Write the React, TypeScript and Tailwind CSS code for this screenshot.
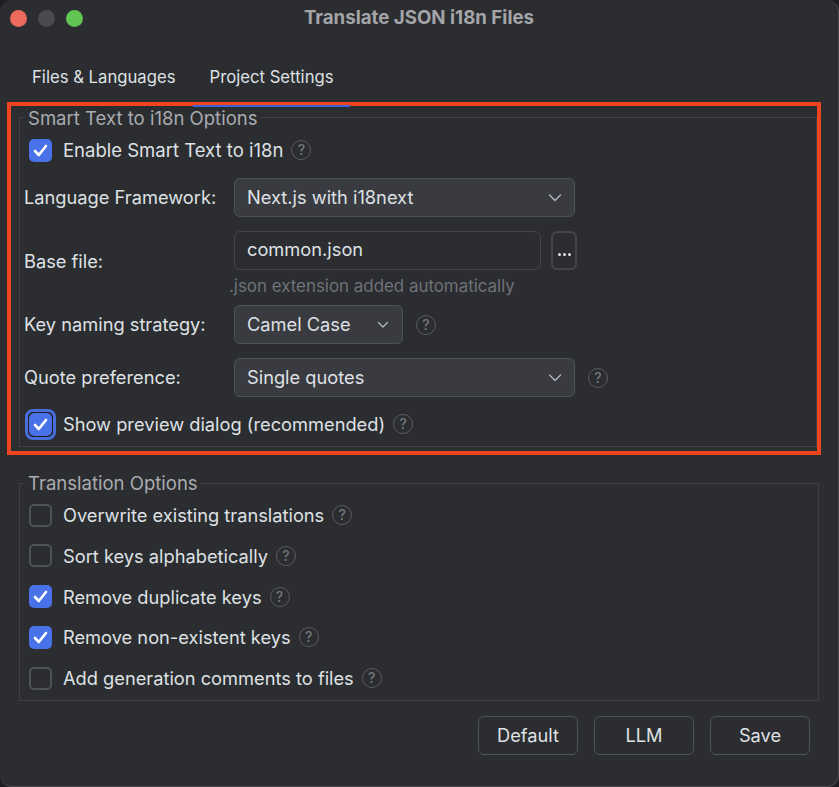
import React from "react";

const Help = () => (
  <span className="flex h-[20px] w-[20px] shrink-0 items-center justify-center rounded-full border-[1.5px] border-[#5a5c61] text-[14px] font-medium leading-none text-[#74777c]">?</span>
);

const Check = ({ on, focus }: { on?: boolean; focus?: boolean }) => (
  <span className={"relative flex h-[23px] w-[23px] shrink-0 items-center justify-center rounded-[5px] " + (on ? "bg-[#4a72e8]" : "border-2 border-[#4e5157]")}>
    {focus && <span className="absolute -inset-[4px] rounded-[8px] border-[3px] border-[#466fdc]" />}
    {focus && <span className="absolute -inset-[1px] rounded-[6px] border border-[#1e2023]" />}
    {on && (
      <svg width="17" height="17" viewBox="0 0 17 17" fill="none">
        <path d="M3 9 L6.8 13 L14 4" stroke="#ffffff" strokeWidth="2.6" strokeLinecap="round" strokeLinejoin="round" />
      </svg>
    )}
  </span>
);

const CheckRow = ({ label, on, focus, wide }: { label: string; on?: boolean; focus?: boolean; wide?: boolean }) => (
  <div className="flex items-center">
    <Check on={on} focus={focus} />
    <span className={"ml-[11px] text-[#dfe1e5] " + (wide ? "text-[18.5px]" : "")}>{label}</span>
    <span className="ml-[8px]"><Help /></span>
  </div>
);

const Select = ({ value, width, small }: { value: string; width: string; small?: boolean }) => (
  <div className={"flex h-[39px] items-center justify-between rounded-[6px] border border-[#4e5157] bg-[#393b40] pl-[12px] pb-[2px] text-[#dfe1e5] " + (small ? "pr-[13px] " : "pr-[12px] ") + width}>
    <span>{value}</span>
    <svg className="mt-[2px]" width={small ? 12 : 14} height="9" viewBox={small ? "0 0 12 9" : "0 0 14 9"} fill="none">
      {small ? (
        <path d="M1.5 2.5 L6 7 L10.5 2.5" stroke="#b9bcc2" strokeWidth="1.2" strokeLinecap="round" strokeLinejoin="round" />
      ) : (
        <path d="M1.5 2 L7 7.5 L12.5 2" stroke="#b9bcc2" strokeWidth="1.2" strokeLinecap="round" strokeLinejoin="round" />
      )}
    </svg>
  </div>
);

const Btn = ({ label }: { label: string }) => (
  <div className="flex h-[39px] w-[100px] items-center justify-center rounded-[6px] border border-[#4e5157] pb-[2px] text-[#dfe1e5]">{label}</div>
);

export default function App() {
  return (
    <div className="h-[787px] w-[839px] bg-[#1e1f22] font-['Inter',sans-serif] text-[18.25px] leading-[24px]">
      <div className="relative flex h-full w-full flex-col rounded-[12px] border-r border-b border-[#4a4c50] bg-[#2b2d30]">
        <div className="flex h-[36px] shrink-0 items-center pl-[10px]">
          <div className="flex gap-[11px]">
            <span className="h-[17px] w-[17px] rounded-full bg-[#ed6a5e]" />
            <span className="h-[17px] w-[17px] rounded-full bg-[#4a4b4f]" />
            <span className="h-[17px] w-[17px] rounded-full bg-[#61c554]" />
          </div>
          <div className="ml-[208px] w-[256px] text-center text-[18.7px] font-bold text-[#a3a5a9]">Translate JSON i18n Files</div>
        </div>
        <div className="flex h-[66px] shrink-0 items-start gap-[34px] pl-[32px] pt-[29px] text-[16.7px] text-[#dfe1e5]">
          <span>Files &amp; Languages</span>
          <span>Project Settings</span>
        </div>
        <div className="relative ml-[7px] h-[353px] w-[814px] shrink-0 border-4 border-[#ee4420]">
          <div className="absolute -top-[1px] left-[182px] h-[2px] w-[157px] bg-[#3a64d8]" />
          <fieldset className="ml-[8px] mt-[1px] h-[340px] w-[798px] border border-[#3e4044]">
            <legend className="relative top-[1px] ml-[5px] px-[3px] text-[18.55px] leading-[20px] text-[#a9abaf]">Smart Text to i18n Options</legend>
            <div className="pl-[4px]">
              <div className="ml-[5px] mt-[11px]"><CheckRow label="Enable Smart Text to i18n" on wide /></div>
              <div className="mt-[16px] flex items-center">
                <span className="w-[210px] pb-[2px] text-[#dfe1e5]">Language Framework:</span>
                <Select value="Next.js with i18next" width="w-[341px]" />
              </div>
              <div className="mt-[14px] flex items-start">
                <span className="mt-[18px] w-[210px] text-[#dfe1e5]">Base file:</span>
                <div>
                  <div className="flex items-center">
                    <div className="flex h-[39px] w-[307px] items-center rounded-[6px] border border-[#43454a] pb-[3px] pl-[12px] text-[#dfe1e5]">common.json</div>
                    <div className="relative ml-[10px] h-[39px] w-[26px] rounded-[6px] border-2 border-[#43454a]">
                      <span className="absolute left-[5px] top-[20px] flex gap-[2px]">
                        <i className="h-[3px] w-[3px] rounded-full bg-[#dfe1e5]" />
                        <i className="h-[3px] w-[3px] rounded-full bg-[#dfe1e5]" />
                        <i className="h-[3px] w-[3px] rounded-full bg-[#dfe1e5]" />
                      </span>
                    </div>
                  </div>
                  <div className="ml-[-5px] mt-[4px] text-[16.9px] text-[#6f7278]">.json extension added automatically</div>
                </div>
              </div>
              <div className="mt-[7px] flex items-center">
                <span className="w-[210px] pb-[2px] text-[#dfe1e5]">Key naming strategy:</span>
                <Select value="Camel Case" width="w-[169px]" small />
                <span className="ml-[13px]"><Help /></span>
              </div>
              <div className="mt-[14px] flex items-center">
                <span className="w-[210px] pb-[2px] text-[#dfe1e5]">Quote preference:</span>
                <Select value="Single quotes" width="w-[341px]" />
                <span className="ml-[13px]"><Help /></span>
              </div>
              <div className="ml-[5px] mt-[15px]"><CheckRow label="Show preview dialog (recommended)" on focus /></div>
            </div>
          </fieldset>
        </div>
        <fieldset className="ml-[19px] mt-[18px] h-[228px] w-[800px] border border-[#3e4044]">
          <legend className="ml-[5px] px-[3px] text-[18.55px] leading-[20px] text-[#a9abaf]">Translation Options</legend>
          <div className="ml-[9px] mt-[10px] flex flex-col gap-[16.75px]">
            <CheckRow label="Overwrite existing translations" />
            <CheckRow label="Sort keys alphabetically" />
            <CheckRow label="Remove duplicate keys" on />
            <CheckRow label="Remove non-existent keys" on />
            <CheckRow label="Add generation comments to files" />
          </div>
        </fieldset>
        <div className="mt-[15px] flex justify-end gap-[16px] pr-[28px]">
          <Btn label="Default" />
          <Btn label="LLM" />
          <Btn label="Save" />
        </div>
      </div>
    </div>
  );
}
